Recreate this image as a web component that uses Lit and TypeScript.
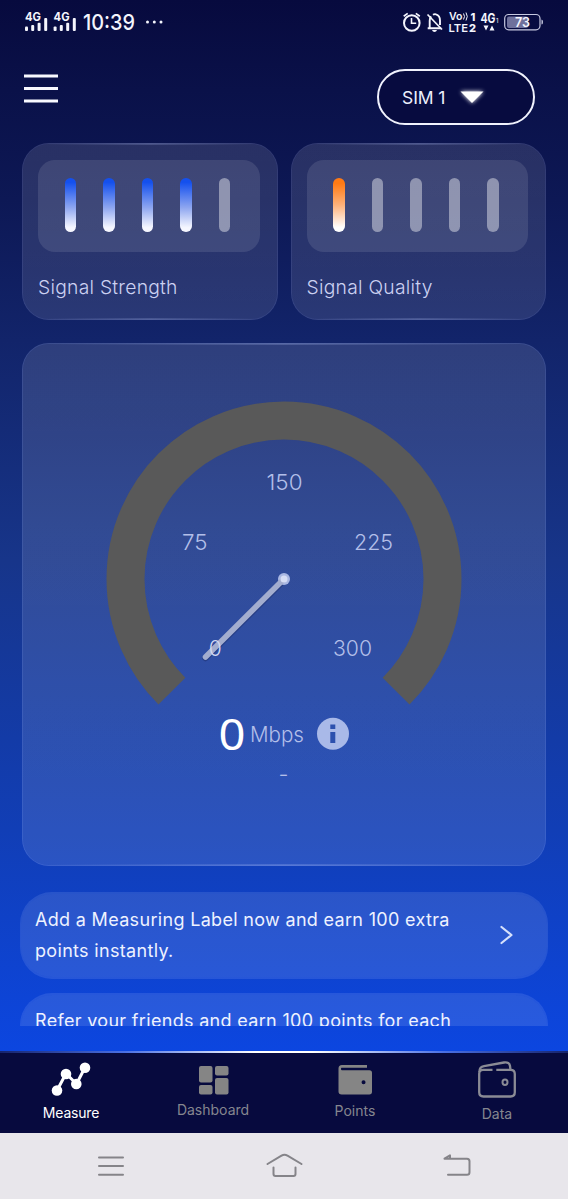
import { LitElement, html, svg, css } from "lit";
import { customElement, property } from "lit/decorators.js";

@customElement("status-bar")
class StatusBar extends LitElement {
  static styles = css`
    :host { display: block; height: 44px; }
    svg { display: block; }
    text { font-family: Inter, "Liberation Sans", sans-serif; fill: #f4f5fd; }
    .net { font-size: 11.5px; font-weight: 700; }
    .time { font-size: 22px; font-weight: 500; }
    .lte { font-size: 10.5px; font-weight: 600; }
    .num { font-size: 11px; font-weight: 800; }
    .g { font-size: 12.5px; font-weight: 700; }
    .tiny { font-size: 6px; }
    .bat { font-size: 12.5px; font-weight: 600; }
  `;
  private signal(x: number) {
    return svg`<g transform="translate(${x} 0)" fill="#f4f5fd">
      <text class="net" x="0" y="20.7" textLength="16" lengthAdjust="spacingAndGlyphs">4G</text>
      <rect x="0" y="26.5" width="3" height="4.5" rx="1"/>
      <rect x="6.2" y="25" width="3" height="6" rx="1"/>
      <rect x="12.6" y="22.7" width="3" height="8.3" rx="1"/>
      <rect x="19.2" y="18" width="3" height="13" rx="1"/>
    </g>`;
  }
  render() {
    return html`<svg width="568" height="44" viewBox="0 0 568 44">
      ${this.signal(25)}${this.signal(53.6)}
      <text class="time" x="83" y="30" textLength="52" lengthAdjust="spacingAndGlyphs">10:39</text>
      <g fill="#f4f5fd"><circle cx="147.500" cy="22" r="1.500"/><circle cx="154.300" cy="22" r="1.500"/><circle cx="161" cy="22" r="1.500"/></g>
      <g fill="none" stroke="#f4f5fd" stroke-width="2">
        <circle cx="411.800" cy="23" r="7.800"/>
        <path d="M411.500 18v5.300h4.700" stroke-width="1.600"/>
        <path d="M403.700 16.200l4-2.800M419.800 16.200l-4-2.800" stroke-width="1.700"/>
        <path d="M427.700 28.200h13.500M429.700 28v-7.200q0-3 1.500-4.500M433 14.800q1.500-1 3-.5 4 1 4 6.300V25" stroke-width="1.900"/>
        <path d="M427.500 14.500L442 29.500" stroke-width="1.700"/>
      </g>
      <path d="M432 30h5q-.7 2-2.500 2T432 30z" fill="#f4f5fd"/>
      <text class="lte" x="449" y="20" textLength="13.500" lengthAdjust="spacingAndGlyphs">Vo</text>
      <path d="M463.500 13.500q2 3 0 6M466 12.500q2.500 4 0 8" fill="none" stroke="#f4f5fd" stroke-width="1"/>
      <text class="num" x="470.500" y="20.800">1</text>
      <text class="lte" x="448.500" y="31.700" textLength="19.500" lengthAdjust="spacingAndGlyphs">LTE</text>
      <text class="num" x="469" y="31.700">2</text>
      <text class="g" x="480.500" y="22.500" textLength="15" lengthAdjust="spacingAndGlyphs">4G</text>
      <text class="tiny" x="496" y="22.700">1</text>
      <path d="M483.500 25.500h5l-2.500 5zM489.500 30.500h5l-2.500-5z" fill="#f4f5fd"/>
      <rect x="507" y="16.500" width="21" height="11.500" rx="2" fill="#6f719c"/>
      <rect x="504.700" y="14.500" width="35.300" height="15.300" rx="4" fill="none" stroke="#c6c8e0" stroke-width="1.200"/>
      <path d="M541.500 19.500q1.500 0 1.500 2.500t-1.500 2.500z" fill="#c6c8e0"/>
      <text class="bat" x="515" y="26.700" textLength="15" lengthAdjust="spacingAndGlyphs">73</text>
    </svg>`;
  }
}

@customElement("signal-card")
class SignalCard extends LitElement {
  @property() label = "";
  @property() tone = "blue";
  @property({ type: Number }) level = 0;
  static styles = css`
    :host {
      display: flex; flex-direction: column; flex: 1; box-sizing: border-box; height: 177px;
      padding: 16px 17px 0 15px; border-radius: 27px;
      border: 1px solid rgba(205, 212, 255, 0.2);
      background: linear-gradient(rgba(255, 255, 255, 0.12), rgba(255, 255, 255, 0.1)) padding-box;
      font-family: Inter, "Liberation Sans", sans-serif;
      position: relative;
    }
    :host::before, :host::after {
      content: ""; position: absolute; left: 20px; right: 20px; height: 2px;
      background: linear-gradient(90deg, transparent, rgba(190, 205, 255, 0.2), transparent);
    }
    :host::before { top: -1px; }
    :host::after { bottom: -1px; }
    .panel {
      height: 92px; box-sizing: border-box; border-radius: 17px; padding: 18px 29.5px 0 26.5px;
      display: flex; justify-content: space-between; background: rgba(255, 255, 255, 0.105);
    }
    .bar { width: 11.5px; height: 54px; border-radius: 6px; background: rgba(255, 255, 255, 0.42); }
    .blue { background: linear-gradient(#1450ee 8%, #8ea6f0 55%, #f6f7ff 92%); }
    .orange { background: linear-gradient(#ff7a14 10%, #ffb27a 50%, #ffffff 92%); }
    .label { margin-top: 22.5px; line-height: 24px; font-size: 19.3px; letter-spacing: 0.25px; font-weight: 300; color: #ccd1f2; white-space: nowrap; }
  `;
  render() {
    return html`<div class="panel">
        ${[1, 2, 3, 4, 5].map((n) => html`<div class="bar ${n <= this.level ? this.tone : ""}"></div>`)}
      </div>
      <div class="label">${this.label}</div>`;
  }
}

@customElement("speed-gauge")
class SpeedGauge extends LitElement {
  static styles = css`
    :host {
      display: block; box-sizing: border-box; height: 523px; margin: 23px 22px 0; border-radius: 27px;
      border: 1px solid rgba(190, 205, 255, 0.24);
      background: linear-gradient(rgba(255, 255, 255, 0.12), rgba(255, 255, 255, 0.11)) padding-box;
      position: relative;
    }
    :host::before, :host::after {
      content: ""; position: absolute; left: 24px; right: 24px; height: 2px;
      background: linear-gradient(90deg, transparent, rgba(190, 205, 255, 0.22), transparent);
    }
    :host::before { top: -1px; }
    :host::after { bottom: -1px; }
    svg { display: block; }
    text { font-family: Inter, "Liberation Sans", sans-serif; font-size: 22px; font-weight: 300; fill: #b3bfe9; }
    .start { fill: #d3daf2; }
    .zero { font-family: "Noto Sans", Inter, sans-serif; font-size: 43px; font-weight: 400; fill: #fff; }
  `;
  render() {
    return html`<svg width="522" height="521" viewBox="23 344 522 521">
      <path d="M171.900 691.100A158.500 158.500 0 1 1 396.100 691.100" fill="none" stroke="#595959" stroke-width="38"/>
      <text x="266.500" y="490" textLength="36" lengthAdjust="spacingAndGlyphs">150</text>
      <text x="182" y="550" textLength="25.500" lengthAdjust="spacingAndGlyphs">75</text>
      <text x="354" y="550" textLength="39" lengthAdjust="spacingAndGlyphs">225</text>
      <text x="333" y="656" textLength="39" lengthAdjust="spacingAndGlyphs">300</text>
      <path d="M284 580L205.500 658" stroke="#1d2d66" stroke-opacity=".45" stroke-width="6.500" stroke-linecap="round"/>
      <circle cx="284" cy="579" r="6" fill="#aab8e3"/>
      <path d="M284 579L205.500 657" stroke="#a3adcf" stroke-width="5.600" stroke-linecap="round"/>
      <circle cx="284" cy="579" r="3.500" fill="#d7def5"/>
      <text class="start" x="208.700" y="656" textLength="13" lengthAdjust="spacingAndGlyphs">0</text>
      <text class="zero" x="218.500" y="749.500" textLength="27" lengthAdjust="spacingAndGlyphs">0</text>
      <text x="250" y="742" textLength="54" lengthAdjust="spacingAndGlyphs">Mbps</text>
      <circle cx="333" cy="733.800" r="16" fill="#a9b9e8"/>
      <path d="M330.300 724.500h5v4.600h-5zM330.300 732h5v11h-5z" fill="#2c50ae"/>
      <text x="278.500" y="782" textLength="10" lengthAdjust="spacingAndGlyphs">-</text>
    </svg>`;
  }
}

@customElement("promo-card")
class PromoCard extends LitElement {
  static styles = css`
    :host {
      display: flex; align-items: center; justify-content: space-between; flex: none;
      box-sizing: border-box; height: 87px; padding: 0 34px 1px 14px; border-radius: 32px;
      border: 1px solid rgba(190, 205, 255, 0.14); border-top-width: 2px; border-bottom-width: 2px;
      background: rgba(255, 255, 255, 0.115) padding-box;
      font: 400 18px/31px Inter, "Liberation Sans", sans-serif; color: #eef2ff; white-space: nowrap;
    }
    .text { letter-spacing: 0.32px; }
    svg { flex: none; }
  `;
  render() {
    return html`<div class="text"><slot></slot></div>
      <svg width="14" height="20" viewBox="0 0 14 20" fill="none" stroke="#d5e0fb" stroke-width="2.200" stroke-linecap="round" stroke-linejoin="round"><path d="M2.500 2L12.500 10 2.500 18"/></svg>`;
  }
}

@customElement("app-root")
class AppRoot extends LitElement {
  static styles = css`
    :host {
      display: flex; flex-direction: column; height: 1199px; overflow: hidden;
      font-family: Inter, "Liberation Sans", sans-serif;
      background: linear-gradient(#070a3e 0, #0a1149 90px, #0d1855 200px, #12246a 340px, #17358a 560px, #113eb6 830px, #0c46e0 1051px);
    }
    .header { display: flex; justify-content: space-between; height: 99px; box-sizing: border-box; padding: 25px 33px 0 24px; }
    .menu { margin-top: 5px; }
    .sim {
      display: flex; align-items: center; box-sizing: border-box; width: 158px; height: 56px; padding-left: 23px;
      border: 2px solid #f0f2fd; border-radius: 28px; background: #070b3f; color: #eceffc; font-size: 17.5px;
    }
    .sim span { width: 57px; white-space: nowrap; letter-spacing: -0.1px; }
    .arrow { filter: drop-shadow(0 0 2px #fff); }
    .signals { display: flex; gap: 13px; padding: 0 22px; }
    .promos { display: flex; flex-direction: column; gap: 14px; height: 134px; overflow: hidden; margin: 26px 20px 0; }
    .nav {
      display: flex; justify-content: space-between; box-sizing: border-box; height: 82px; margin-top: 25px; flex: none;
      border-top: 2px solid; border-image: linear-gradient(90deg, #16236c 0, #4a70e4 22%, #fff 45%, #fff 55%, #4a70e4 78%, #16236c 100%) 1;
      background: #070a3e; color: #85868f; font-size: 14px;
    }
    .tab { width: 142px; display: flex; flex-direction: column; align-items: center; line-height: 18px; }
    .active { color: #fff; letter-spacing: -0.2px; }
    .tab svg { display: block; }
    .system { display: block; flex: none; background: #e8e6eb; }
  `;
  render() {
    return html`
      <status-bar></status-bar>
      <div class="header">
        <svg class="menu" width="34" height="30" viewBox="0 0 34 30" fill="#f8f9ff"><path d="M0 .5h34v3H0zM0 13h34v3H0zM0 25.500h34v3H0z"/></svg>
        <div class="sim"><span>SIM 1</span>
          <svg class="arrow" width="26" height="15" viewBox="0 0 26 15"><path d="M1.500 1.500h23L13 13z" fill="#fff"/></svg>
        </div>
      </div>
      <div class="signals">
        <signal-card label="Signal Strength" level="4" tone="blue"></signal-card>
        <signal-card label="Signal Quality" level="1" tone="orange"></signal-card>
      </div>
      <speed-gauge></speed-gauge>
      <div class="promos">
        <promo-card>Add a Measuring Label now and earn 100 extra<br>points instantly.</promo-card>
        <promo-card>Refer your friends and earn 100 points for each<br>successful referral.</promo-card>
      </div>
      <div class="nav">
        <div class="tab active">
          <svg width="142" height="51" viewBox="0 1053 142 51"><path d="M57 1090.500L66 1073.500 76.500 1084 85 1067.500" fill="none" stroke="#fff" stroke-width="3"/><g fill="#fff"><circle cx="57" cy="1090.500" r="5.300"/><circle cx="66" cy="1074" r="5.300"/><circle cx="76.300" cy="1084" r="5.300"/><circle cx="85" cy="1067.800" r="5.300"/></g></svg>
          <span>Measure</span>
        </div>
        <div class="tab">
          <svg width="142" height="48" viewBox="142 1053 142 48" fill="#858585"><rect x="199" y="1066" width="13.500" height="16.500" rx="2"/><rect x="215" y="1066" width="13.500" height="9.500" rx="2"/><rect x="199" y="1085" width="13.500" height="9.500" rx="2"/><rect x="215" y="1078" width="13.500" height="16.500" rx="2"/></svg>
          <span>Dashboard</span>
        </div>
        <div class="tab">
          <svg width="142" height="49" viewBox="284 1053 142 49"><path fill="#858585" fill-rule="evenodd" d="M342 1065h25v2.700h-25.500q-.5 0-.5 1.300t1 1.300h27.500q2.500 0 2.500 2.500v19q0 2.700-2.700 2.700h-27.600q-3.200 0-3.200-3v-23q0-3.500 3.500-3.500zM363.500 1080.300a2 2 0 1 0 .1 4 2 2 0 0 0-.1-4z"/></svg>
          <span>Points</span>
        </div>
        <div class="tab">
          <svg width="142" height="52" viewBox="426 1053 142 52" fill="none" stroke="#8a8b95" stroke-width="2.300"><path d="M492.500 1069.800H483q-3.800 0-3.800 4v18.500q0 4.200 4.200 4.200h27.200q4.200 0 4.200-4.200V1074q0-4.200-4.200-4.200H496.300"/><path d="M479.500 1072q-.3-5 4.500-5.800l20-3.700q5.500-.8 6 3.500l.5 3.800"/><ellipse cx="505" cy="1082.300" rx="2.500" ry="2.700" stroke-width="2"/></svg>
          <span>Data</span>
        </div>
      </div>
      <svg class="system" width="568" height="66" viewBox="0 1133 568 66" fill="none" stroke="#858489" stroke-width="2" stroke-linecap="round" stroke-linejoin="round">
        <path d="M99 1157.500h24M99 1166h24M99 1174.700h24"/>
        <path d="M267.500 1164l14-8.300q3-1.700 6 0l14 8.300M273.500 1167.500v6.500q0 2 2 2h18q2 0 2-2v-6.500"/>
        <path d="M448 1174.700h19q2.500 0 2.500-2.500v-11q0-2.500-2.500-2.500h-22.500l5.500-3.300v3"/>
      </svg>`;
  }
}
